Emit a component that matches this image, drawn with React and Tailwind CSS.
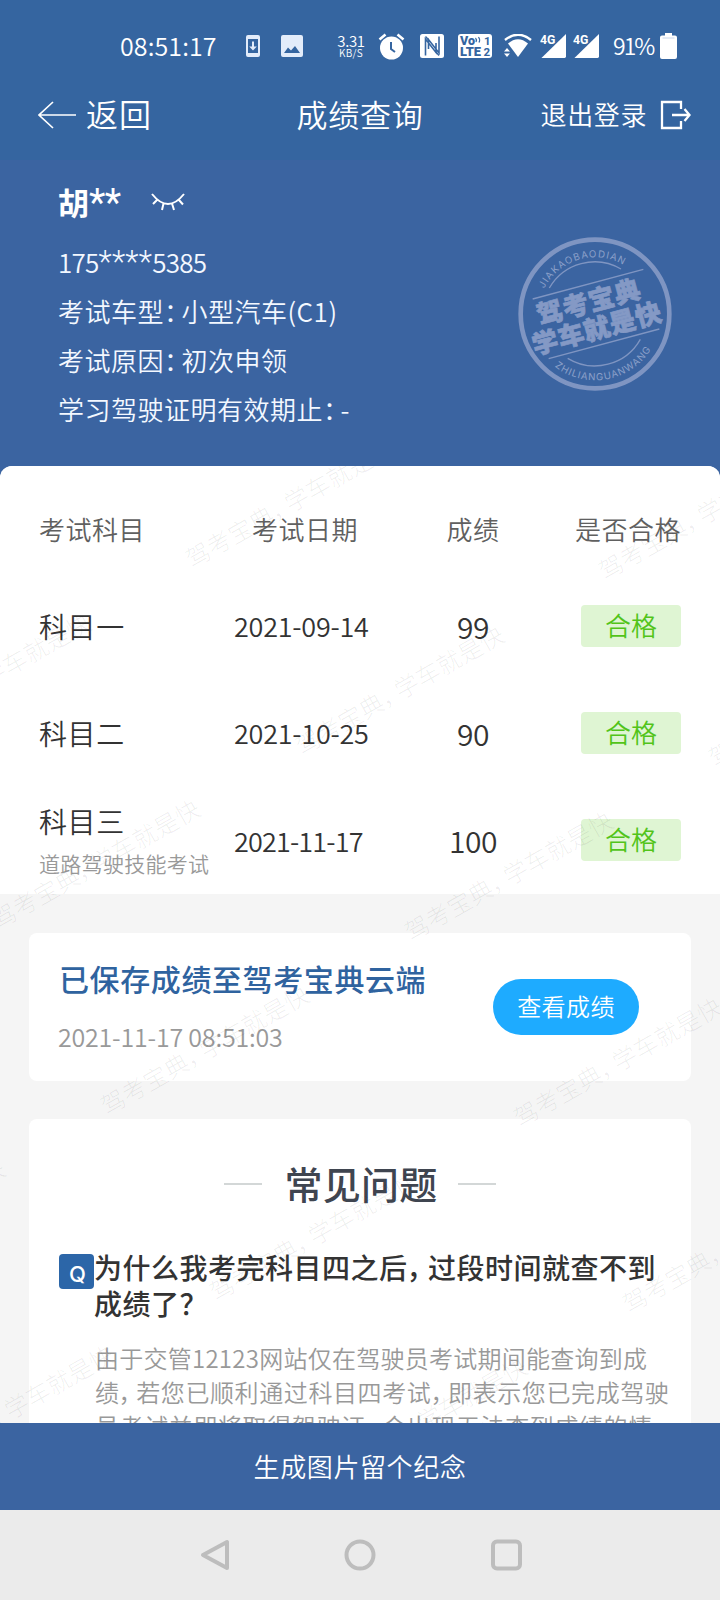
import { Fragment } from 'react';

const subjects = [
  { name: '科目一', date: '2021-09-14', score: 99 },
  { name: '科目二', date: '2021-10-25', score: 90 },
  { name: '科目三', note: '道路驾驶技能考试', date: '2021-11-17', score: 100, narrow: true },
];

const profile = [
  { label: '考试车型：', value: '小型汽车(C1)' },
  { label: '考试原因：', value: '初次申领' },
  { label: '学习驾驶证明有效期止：', value: '-' },
];

const question = ['为什么我考完科目四之后，过段时间就查不到', '成绩了？'];

const answer = [
  '由于交管12123网站仅在驾驶员考试期间能查询到成',
  '绩，若您已顺利通过科目四考试，即表示您已完成驾驶',
  '员考试并即将取得驾驶证，会出现无法查到成绩的情',
];

// left end of every watermark line, relative to the content area
const watermarks = [
  [199, 85], [612, 97],
  [-104, 260], [309, 272], [722, 284],
  [5, 446], [418, 458],
  [114, 632], [527, 644],
  [-190, 806], [223, 818], [636, 830],
  [-81, 992], [332, 1004],
];

// full width commas take less room than a whole character
function Line({ text }) {
  return text.split('，').map((part, i) => (
    <Fragment key={i}>
      {i > 0 && <span className="-ml-px -mr-[7px]">，</span>}
      {part}
    </Fragment>
  ));
}

function StatusBar() {
  return (
    <div className="flex h-[92px] items-center text-white">
      <span className="mb-px ml-[120px] w-[126px] text-[25px] font-[350] leading-none tracking-[0.100px]">08:51:17</span>
      <svg className="h-[22px] w-[14px]" viewBox="0 0 14 22">
        <path fillRule="evenodd" fill="#e3ecfa" d="M2 0h10a2 2 0 0 1 2 2v18a2 2 0 0 1-2 2H2a2 2 0 0 1-2-2V2a2 2 0 0 1 2-2zM2 4v14h10V4z" />
        <path fill="#e3ecfa" d="M6 6.500h2v5h2.800L7 15.500l-3.800-4H6z" />
      </svg>
      <svg className="ml-[21px] h-[22px] w-[22px]" viewBox="0 0 22 22">
        <path fillRule="evenodd" fill="#e3ecfa" d="M2 0h18a2 2 0 0 1 2 2v18a2 2 0 0 1-2 2H2a2 2 0 0 1-2-2V2a2 2 0 0 1 2-2zM3 18h16l-5-7-4 4.500-3-3z" />
      </svg>
      <div className="mb-[2px] ml-[34px] w-[28px] text-center font-[350] leading-none">
        <div className="text-[15px] leading-[15px] tracking-[-0.300px]">3.31</div>
        <div className="text-[10px] leading-[10px] tracking-[0.300px]">KB/S</div>
      </div>
      <svg className="ml-[13px] h-[27px] w-[27px]" viewBox="0 0 27 27">
        <circle cx="13.500" cy="15" r="11.500" fill="#fff" />
        <path d="M1.500 6.500L7.500 1.500M25.500 6.500L19.500 1.500" stroke="#fff" strokeWidth="2.600" />
        <path d="M13 9v7l4 3" stroke="#3565a0" strokeWidth="2" fill="none" />
      </svg>
      <svg className="ml-[15px] h-[24px] w-[24px]" viewBox="0 0 24 24">
        <rect width="24" height="24" rx="2.500" fill="#fff" />
        <path d="M5.500 21.500V5L16 18.500V9M8.500 15V5.500L19 19V2.500" fill="none" stroke="#3565a0" strokeWidth="1.600" />
        <path d="M5.500 2.500L8.500 6M16 18l3 3.500" stroke="#3565a0" strokeWidth="1.400" />
      </svg>
      <svg className="ml-[14px] h-[24px] w-[34px]" viewBox="0 0 34 24">
        <rect width="34" height="24" rx="3" fill="#fff" />
        <g fill="#3565a0" fontFamily="Roboto" fontWeight="900">
          <text x="2" y="11" fontSize="12.500" textLength="15" lengthAdjust="spacingAndGlyphs">Vo</text>
          <text x="2" y="22" fontSize="12.500" textLength="21" lengthAdjust="spacingAndGlyphs">LTE</text>
          <text x="26" y="11" fontSize="11.500" fontWeight="700">1</text>
          <text x="25.500" y="22" fontSize="11.500" fontWeight="700">2</text>
        </g>
        <path d="M17.500 4q1.500 1.500 .5 4M20.500 3q2 2.500 .5 5.500" stroke="#3565a0" fill="none" strokeWidth="1.200" />
      </svg>
      <svg className="ml-[12px] h-[24px] w-[28px]" viewBox="0 0 28 24">
        <path d="M1 6Q14-4.500 27 6" stroke="#fff" strokeWidth="2.400" fill="none" />
        <path d="M4 9.500Q14 1 24 9.500L14 23z" fill="#fff" />
        <path d="M0 17.500L3 14l3 3.500zM0 19.500h6L3 23z" fill="#fff" />
      </svg>
      <Signal className="ml-[8px]" />
      <Signal className="ml-[7px]" />
      <span className="mb-px ml-[14px] w-[40px] whitespace-nowrap text-[23px] font-[350] leading-none tracking-[-2px]">91%</span>
      <svg className="ml-[7px] h-[26px] w-[17px]" viewBox="0 0 17 26">
        <path d="M5 0h7v2.500h3a2 2 0 0 1 2 2V24a2 2 0 0 1-2 2H2a2 2 0 0 1-2-2V4.500a2 2 0 0 1 2-2h3z" fill="#fff" />
        <path d="M2.500 5h12" stroke="#c9d6ea" strokeWidth="1" />
      </svg>
    </div>
  );
}

function Signal({ className }) {
  return (
    <svg className={`${className} h-[26px] w-[26px] shrink-0`} viewBox="0 0 27 26">
      <path d="M27 .5V24a1.500 1.500 0 0 1-1.500 1.500H1.500z" fill="#fff" />
      <text x="0" y="10.500" fontSize="13" fontWeight="700" fontFamily="Roboto" textLength="16" lengthAdjust="spacingAndGlyphs" fill="#fff" stroke="#3565a0" strokeWidth="2" paintOrder="stroke">4G</text>
    </svg>
  );
}

function Stamp() {
  return (
    <svg className="h-[154px] w-[154px]" viewBox="56 50 462 462">
      <defs>
        <path id="stampTop" d="M117 281A170 170 0 0 1 457 281" />
        <path id="stampBottom" d="M88 281A199 199 0 0 0 486 281" />
      </defs>
      <g fill="none" stroke="#7f95c2" strokeWidth="4">
        <circle cx="287" cy="281" r="223" strokeWidth="14" />
        <path d="M100 236L432 147M148 415L480 326" />
        <path d="M150 203A157 157 0 0 1 365 146M205 414A157 157 0 0 0 423 357" />
      </g>
      <g fill="#8ba0c9" fontFamily="Inter, sans-serif" fontSize="29">
        <text>
          <textPath href="#stampTop" startOffset="78" textLength="278">JIAKAOBAODIAN</textPath>
        </text>
        <text>
          <textPath href="#stampBottom" startOffset="182" textLength="330">ZHILIANGUANWANG</textPath>
        </text>
      </g>
      <g fill="#8499c5" stroke="#8499c5" strokeWidth="2" fontFamily="'Noto Sans CJK SC', sans-serif" fontWeight="900" fontSize="78" transform="rotate(-15 287 281)">
        <text x="118" y="270" textLength="318">驾考宝典</text>
        <text x="81" y="353" textLength="398">学车就是快</text>
      </g>
    </svg>
  );
}

function Header() {
  return (
    <div className="relative flex h-[68px] items-start justify-between bg-[#3565a0] text-white">
      <div className="ml-[38px] flex h-[45px] items-center">
        <svg className="h-[28px] w-[38px]" viewBox="0 0 38 28" fill="none" stroke="#fff" strokeWidth="1.700">
          <path d="M38 14H1M15 1L1 14l14 13" />
        </svg>
        <span className="mb-[3px] ml-[10px] text-[32px] font-[350] leading-none tracking-[1px]">返回</span>
      </div>
      <h1 className="absolute inset-x-0 flex h-[43px] items-center justify-center text-[31px] font-[350] leading-none tracking-[0.700px]">成绩查询</h1>
      <div className="mr-[29px] flex h-[45px] items-center">
        <span className="mb-px text-[26px] font-[350] leading-none tracking-[0.600px]">退出登录</span>
        <svg className="ml-[13px] h-[30px] w-[31px]" viewBox="0 0 31 30" fill="none" stroke="#fff" strokeWidth="2.300">
          <path d="M21 9V2H2v26h19v-7M12 15h17M24.500 9l5 6-5 6" />
        </svg>
      </div>
    </div>
  );
}

function Profile() {
  return (
    <div className="flex h-[306px] justify-between bg-[#3b64a1] text-[#f3f8ff]">
      <div className="pl-[58px] pt-[21px]">
        <div className="flex h-10 items-center text-white">
          <div className="flex w-[93px] items-center text-[31px] font-bold leading-none">
            胡<span className="mt-1 font-['Roboto',sans-serif] text-[38px] font-normal tracking-[-0.500px]">**</span>
          </div>
          <svg className="mt-1 h-[22px] w-[34px]" viewBox="0 0 34 22" fill="none" stroke="#fff" strokeWidth="2">
            <path d="M1 2Q17 22 33 2M6.500 7.500L2 12M12.500 11.500L11 18M21 11.500l2 6.500M27.500 7.500L32 12.500" />
          </svg>
        </div>
        <div className="mt-[16px] flex h-[49px] items-center text-[26px] font-[350] leading-none tracking-[-0.800px]">
          175<span className="font-['Roboto',sans-serif] text-[31px] font-light tracking-[0.300px]">****</span>5385
        </div>
        {profile.map((item) => (
          <div key={item.label} className="flex h-[49px] items-center whitespace-nowrap text-[26px] font-[350] leading-none tracking-[0.500px]">
            <span>{item.label}</span>
            <span className="-ml-[9px]">{item.value}</span>
          </div>
        ))}
      </div>
      <div className="mr-[48px] pt-[77px]">
        <Stamp />
      </div>
    </div>
  );
}

function ScoreTable() {
  return (
    <div className="h-[428px] rounded-t-[12px] bg-white text-[#333]">
      <div className="grid h-[106px] grid-cols-[235px_165px_146px_135px] pt-[50px] text-[26px] font-[350] leading-none tracking-[0.500px] text-[#606060]">
        <span className="pl-[39px]">考试科目</span>
        <span className="pl-[17px]">考试日期</span>
        <span className="text-center">成绩</span>
        <span className="text-right">是否合格</span>
      </div>
      {subjects.map((s) => (
        <div key={s.name} className="grid h-[107.300px] grid-cols-[235px_165px_146px_135px] items-center leading-none">
          <div className="pl-[39px]">
            <div className="text-[28px] font-[350] tracking-[0.600px]">{s.name}</div>
            {s.note && <div className="mt-[18px] whitespace-nowrap text-[21px] font-[350] tracking-[0.300px] text-[#999]">{s.note}</div>}
          </div>
          <span className={s.narrow ? '-ml-px text-[27px] font-[350] tracking-[-0.850px]' : '-ml-px text-[27px] font-[350] tracking-[-0.250px]'}>{s.date}</span>
          <span className="text-center text-[30px] font-[350] tracking-[-0.400px]">{s.score}</span>
          <span className="flex h-[42px] w-[100px] items-center justify-center justify-self-end rounded bg-[#dff5d3] pb-[2px] text-[26px] font-[350] text-[#52c41a]">合格</span>
        </div>
      ))}
    </div>
  );
}

function SavedCard() {
  return (
    <div className="mx-[29px] mt-[39px] flex h-[148px] items-center justify-between rounded-lg bg-white">
      <div className="pb-[3px] pl-[30px]">
        <div className="text-[30px] font-medium leading-none tracking-[0.600px] text-[#2f639f]">已保存成绩至驾考宝典云端</div>
        <div className="-ml-px mt-[31px] text-[25px] font-[350] leading-none tracking-[-0.200px] text-[#999]">2021-11-17 08:51:03</div>
      </div>
      <button className="mr-[52px] h-[56px] w-[146px] rounded-full bg-[#1eabff] pb-[2px] text-[24px] font-[350] leading-none tracking-[0.400px] text-white">查看成绩</button>
    </div>
  );
}

function Faq() {
  return (
    <div className="mx-[29px] mt-[38px] h-[360px] rounded-t-lg bg-white">
      <div className="flex h-[130px] items-center justify-center gap-[20px]">
        <span className="h-[2px] w-[38px] bg-[#d3d7d7]" />
        <h2 className="mb-[3px] pl-[2px] text-[38px] font-medium leading-none tracking-[0.300px] text-[#3f4550]">常见问题</h2>
        <span className="h-[2px] w-[38px] bg-[#d3d7d7]" />
      </div>
      <div className="flex pl-[30px]">
        <span className="mt-[5px] flex h-[35px] w-[35px] items-center justify-center rounded bg-[#2c66a8] pl-[2px] pt-[5px] font-['Inter',sans-serif] text-[22px] font-medium leading-none text-white">Q</span>
        <div className="whitespace-nowrap">
          <div className="text-[28px] font-medium leading-[36px] tracking-[0.500px] text-[#333]">
            {question.map((line) => (
              <div key={line}><Line text={line} /></div>
            ))}
          </div>
          <div className="mt-[20px] pl-px text-[24px] font-[350] leading-[34px] tracking-[0.600px] text-[#999]">
            {answer.map((line, i) => (
              <div key={line} className={i === 0 ? 'tracking-[0.250px]' : ''}><Line text={line} /></div>
            ))}
          </div>
        </div>
      </div>
    </div>
  );
}

function Watermark() {
  return (
    <div className="pointer-events-none absolute inset-0 overflow-hidden">
      {watermarks.map(([left, top]) => (
        <span
          key={`${left},${top}`}
          className="absolute origin-left -translate-y-1/2 rotate-[-29.500deg] whitespace-nowrap text-[24px] font-light leading-none tracking-[0.300px] text-black/[0.07]"
          style={{ left: left - 12, top: top + 9 }}
        >
          <Line text="驾考宝典，学车就是快" />
        </span>
      ))}
    </div>
  );
}

export default function App() {
  return (
    <div className="flex h-[1600px] w-[720px] flex-col overflow-hidden bg-[#3b64a1] font-['Noto_Sans_CJK_SC',sans-serif]">
      <div className="bg-[#3565a0]">
        <StatusBar />
        <Header />
      </div>
      <Profile />
      <div className="relative h-[957px] overflow-hidden">
        <div className="h-full rounded-t-[12px] bg-[#f5f5f5]">
          <ScoreTable />
          <SavedCard />
          <Faq />
        </div>
        <Watermark />
      </div>
      <button className="h-[87px] shrink-0 bg-[#3b64a1] pb-[2px] text-[26px] font-[350] leading-none tracking-[0.600px] text-white">生成图片留个纪念</button>
      <div className="flex h-[90px] shrink-0 items-center bg-[#ebebeb] pl-[200px]">
        <svg className="h-[32px] w-[322px]" viewBox="0 0 322 32" fill="none" stroke="#bdbdbd" strokeWidth="4" strokeLinejoin="round">
          <path d="M27 3v26L3 16z" />
          <circle cx="160" cy="16" r="13.500" />
          <rect x="293" y="2.500" width="27" height="27" rx="4" />
        </svg>
      </div>
    </div>
  );
}
